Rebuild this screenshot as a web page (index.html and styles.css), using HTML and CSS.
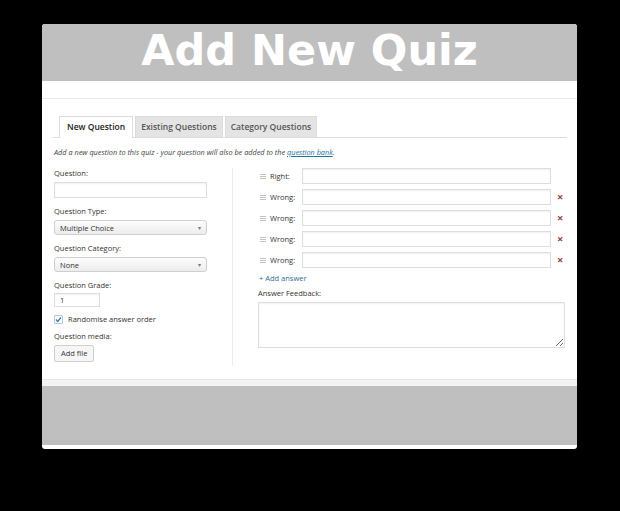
FILE: index.html
```html
<!DOCTYPE html>
<html>
<head>
<meta charset="utf-8">
<link rel="stylesheet" href="styles.css">
</head>
<body>
<div class="window">
  <header class="header"><h1 class="title">Add New Quiz</h1></header>
  <div class="topbar"></div>
  <main class="content">
    <nav class="tabs">
      <span class="tab active">New Question</span>
      <span class="tab">Existing Questions</span>
      <span class="tab">Category Questions</span>
    </nav>
    <p class="desc">Add a new question to this quiz - your question will also be added to the <a href="#">question bank</a>.</p>
    <div class="form">
      <div class="col-left">
        <div class="lbl">Question:</div>
        <input class="txt wide" type="text">
        <div class="lbl gap">Question Type:</div>
        <div class="select"><span>Multiple Choice</span><span class="arrow">&#9662;</span></div>
        <div class="lbl gap">Question Category:</div>
        <div class="select"><span>None</span><span class="arrow">&#9662;</span></div>
        <div class="lbl gap">Question Grade:</div>
        <input class="txt grade" type="text" value="1">
        <div class="check-row">
          <span class="cb"><svg width="9" height="9" viewBox="0 0 9 9"><path d="M2 4.6 L3.8 6.4 L7 2.4" fill="none" stroke="#1e8cbe" stroke-width="1.4"/></svg></span>
          <span class="cb-lbl">Randomise answer order</span>
        </div>
        <div class="lbl gap7">Question media:</div>
        <span class="btn">Add file</span>
      </div>
      <div class="col-right">
        <div class="ans-row">
          <svg class="handle" width="6" height="5" viewBox="0 0 6 5"><rect y="0" width="6" height="1" fill="#c4c4c4"/><rect y="2" width="6" height="1" fill="#c4c4c4"/><rect y="4" width="6" height="1" fill="#c4c4c4"/></svg>
          <span class="ans-lbl">Right:</span>
          <input class="txt ans" type="text">
        </div>
        <div class="ans-row">
          <svg class="handle" width="6" height="5" viewBox="0 0 6 5"><rect y="0" width="6" height="1" fill="#c4c4c4"/><rect y="2" width="6" height="1" fill="#c4c4c4"/><rect y="4" width="6" height="1" fill="#c4c4c4"/></svg>
          <span class="ans-lbl">Wrong:</span>
          <input class="txt ans" type="text">
          <span class="del">&#215;</span>
        </div>
        <div class="ans-row">
          <svg class="handle" width="6" height="5" viewBox="0 0 6 5"><rect y="0" width="6" height="1" fill="#c4c4c4"/><rect y="2" width="6" height="1" fill="#c4c4c4"/><rect y="4" width="6" height="1" fill="#c4c4c4"/></svg>
          <span class="ans-lbl">Wrong:</span>
          <input class="txt ans" type="text">
          <span class="del">&#215;</span>
        </div>
        <div class="ans-row">
          <svg class="handle" width="6" height="5" viewBox="0 0 6 5"><rect y="0" width="6" height="1" fill="#c4c4c4"/><rect y="2" width="6" height="1" fill="#c4c4c4"/><rect y="4" width="6" height="1" fill="#c4c4c4"/></svg>
          <span class="ans-lbl">Wrong:</span>
          <input class="txt ans" type="text">
          <span class="del">&#215;</span>
        </div>
        <div class="ans-row">
          <svg class="handle" width="6" height="5" viewBox="0 0 6 5"><rect y="0" width="6" height="1" fill="#c4c4c4"/><rect y="2" width="6" height="1" fill="#c4c4c4"/><rect y="4" width="6" height="1" fill="#c4c4c4"/></svg>
          <span class="ans-lbl">Wrong:</span>
          <input class="txt ans" type="text">
          <span class="del">&#215;</span>
        </div>
        <a class="add" href="#">+ Add answer</a>
        <div class="lbl fb">Answer Feedback:</div>
        <textarea class="feedback"></textarea>
      </div>
    </div>
  </main>
  <footer class="footer">
    <div class="footer-light"></div>
    <div class="footer-band"></div>
  </footer>
</div>
</body>
</html>
```

FILE: styles.css
```css
html, body {
  margin: 0;
  padding: 0;
  background: #000;
}
body {
  width: 620px;
  height: 511px;
  overflow: hidden;
  font-family: "Open Sans", "Liberation Sans", sans-serif;
  color: #333;
}
.window {
  margin: 24px 0 0 42px;
  width: 535px;
  height: 425px;
  background: #fff;
  border-radius: 3px;
  overflow: hidden;
  display: flex;
  flex-direction: column;
}
.header {
  height: 57px;
  background: #bfbfbf;
  flex: none;
}
.title {
  margin: 0;
  font-family: "DejaVu Sans", sans-serif;
  font-weight: bold;
  font-size: 43px;
  line-height: 52px;
  color: #fff;
  text-align: center;
}
.topbar {
  height: 17px;
  border-bottom: 1px solid #ebebeb;
  flex: none;
}
.content {
  flex: 1;
  padding: 17px 10px 0 11px;
}
.tabs {
  display: flex;
  gap: 2px;
  padding-left: 6px;
  height: 21px;
  border-bottom: 1px solid #dcdcdc;
}
.tab {
  box-sizing: border-box;
  height: 21px;
  padding: 0 5px;
  border: 1px solid #dcdcdc;
  border-bottom: none;
  background: #e4e4e4;
  font-size: 8.5px;
  font-weight: 600;
  line-height: 20px;
  color: #555;
  white-space: nowrap;
}
.tab.active {
  background: #fff;
  color: #222;
  height: 22px;
  padding: 0 7px;
}
.desc {
  margin: 9px 0 0 1px;
  font-size: 7.3px;
  font-style: italic;
  line-height: 10px;
  color: #444;
  white-space: nowrap;
}
.desc a {
  color: #21759b;
}
.form {
  display: flex;
  margin-top: 11px;
}
.col-left {
  box-sizing: border-box;
  width: 180px;
  padding: 0 0 4px 1px;
  border-right: 1px solid #ececec;
}
.lbl {
  font-size: 7.5px;
  line-height: 10px;
  margin-bottom: 4px;
  color: #333;
}
.lbl.gap {
  margin-top: 8px;
}
.lbl.gap7 {
  margin-top: 7px;
}
.txt {
  display: block;
  box-sizing: border-box;
  margin: 0;
  height: 16px;
  padding: 0 5px;
  border: 1px solid #dedede;
  border-radius: 0;
  box-shadow: inset 0 1px 2px rgba(0, 0, 0, 0.06);
  font-family: "Open Sans", "Liberation Sans", sans-serif;
  font-size: 7.5px;
  color: #333;
  background: #fff;
  outline: none;
}
.wide {
  width: 153px;
}
.grade {
  width: 46px;
  height: 14px;
  margin-top: -1px;
}
.select {
  box-sizing: border-box;
  width: 153px;
  height: 15px;
  padding: 0 5px;
  border: 1px solid #cfcfcf;
  border-radius: 3px;
  background: linear-gradient(#fdfdfd, #ececec);
  display: flex;
  justify-content: space-between;
  align-items: center;
  font-size: 7.5px;
  color: #333;
}
.select .arrow {
  font-size: 6px;
  color: #777;
}
.check-row {
  display: flex;
  align-items: center;
  height: 10px;
  margin-top: 7px;
}
.cb {
  box-sizing: border-box;
  width: 9px;
  height: 9px;
  border: 1px solid #c4c4c4;
  border-radius: 1px;
  background: #fff;
  display: flex;
}
.cb svg {
  margin: -1px;
}
.cb-lbl {
  margin-left: 5px;
  font-size: 7.5px;
  color: #333;
}
.btn {
  display: block;
  width: max-content;
  box-sizing: border-box;
  height: 17px;
  padding: 0 6px;
  border: 1px solid #cfcfcf;
  border-radius: 2px;
  background: #f6f6f6;
  font-size: 7.5px;
  line-height: 15px;
  color: #333;
}
.col-right {
  flex: 1;
  padding-left: 25px;
}
.ans-row {
  display: flex;
  align-items: center;
  height: 16px;
  margin-bottom: 5px;
}
.handle {
  margin-left: 2px;
  margin-right: 1px;
  flex: none;
}
.ans-lbl {
  width: 32px;
  margin-left: 3px;
  font-size: 7.5px;
  color: #333;
}
.ans {
  width: 249px;
}
.del {
  margin-left: 6px;
  font-size: 11px;
  font-weight: bold;
  line-height: 10px;
  color: #a23a3a;
}
.add {
  display: block;
  margin-left: 1px;
  font-size: 7.5px;
  line-height: 10px;
  color: #2e6f94;
  text-decoration: none;
}
.lbl.fb {
  margin-top: 5px;
}
.feedback {
  display: block;
  box-sizing: border-box;
  width: 307px;
  height: 46px;
  margin: 0;
  border: 1px solid #dedede;
  box-shadow: inset 0 1px 2px rgba(0, 0, 0, 0.06);
  outline: none;
}
.footer {
  flex: none;
  border-top: 1px solid #e6e6e6;
  padding-bottom: 4px;
}
.footer-light {
  height: 6px;
  background: #f4f4f4;
}
.footer-band {
  height: 59px;
  background: #bfbfbf;
}
```
